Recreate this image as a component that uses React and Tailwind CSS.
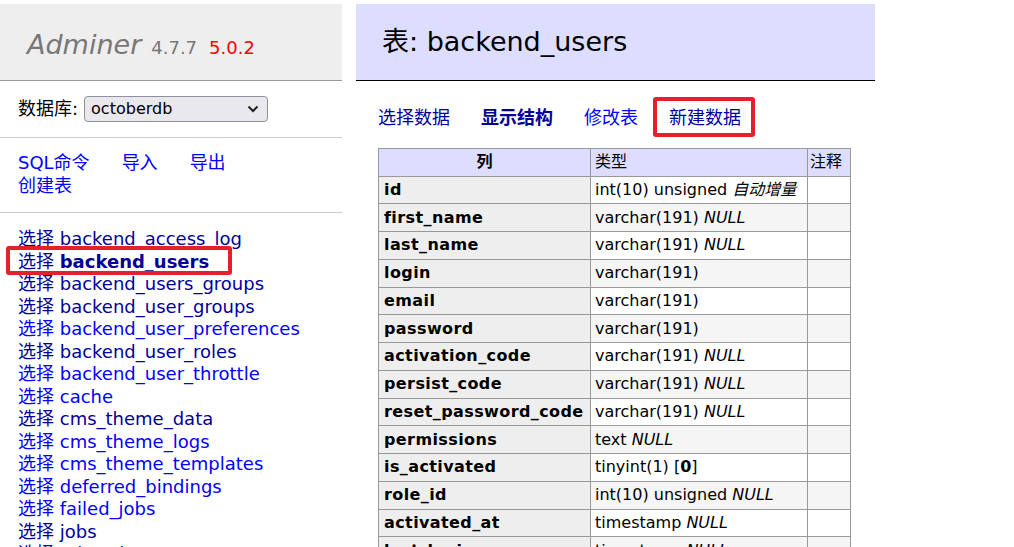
import React from "react";

const tables = [
  ["backend_access_log", true],
  ["backend_users", true, true],
  ["backend_users_groups", true],
  ["backend_user_groups", true],
  ["backend_user_preferences", false],
  ["backend_user_roles", true],
  ["backend_user_throttle", false],
  ["cache", false],
  ["cms_theme_data", true],
  ["cms_theme_logs", false],
  ["cms_theme_templates", false],
  ["deferred_bindings", false],
  ["failed_jobs", false],
  ["jobs", true],
  ["migrations", false],
];

const N = () => <i>NULL</i>;

const rows = [
  ["id", <>int(10) unsigned <i>自动增量</i></>],
  ["first_name", <>varchar(191) <N /></>],
  ["last_name", <>varchar(191) <N /></>],
  ["login", <>varchar(191)</>],
  ["email", <>varchar(191)</>],
  ["password", <>varchar(191)</>],
  ["activation_code", <>varchar(191) <N /></>],
  ["persist_code", <>varchar(191) <N /></>],
  ["reset_password_code", <>varchar(191) <N /></>],
  ["permissions", <>text <N /></>],
  ["is_activated", <>tinyint(1) [<b>0</b>]</>],
  ["role_id", <>int(10) unsigned <N /></>],
  ["activated_at", <>timestamp <N /></>],
  ["last_login", <>timestamp <N /></>],
];

export default function App() {
  return (
    <div
      className="relative w-[1014px] h-[547px] overflow-hidden bg-white flex items-start pt-[4px] text-[18px] leading-[22.5px] text-black"
      style={{ fontFamily: '"DejaVu Sans", Verdana, "Noto Sans CJK SC", sans-serif' }}
    >
      {/* Sidebar */}
      <div className="w-[342px] shrink-0 flex flex-col">
        <div className="shrink-0 h-[77px] bg-[#eee] border-b border-[#999] pl-[27px] flex items-baseline pt-[27px] text-[#777]">
          <span className="italic text-[27px] leading-[27px]">Adminer</span>
          <span className="ml-[10px] text-[18px]">4.7.7</span>
          <span className="ml-[12px] text-[18px] text-[#f00]">5.0.2</span>
        </div>
        <div className="shrink-0 flex items-center pl-[18px] mt-[15px] h-[26px]">
          <span>数据库:</span>
          <div className="ml-[6px] w-[184px] h-[26px] rounded-[4px] border border-[#8f8f9d] bg-[#e9e9ed] flex items-center justify-between pl-[6px] pr-[8px] text-[16px]">
            <span>octoberdb</span>
            <svg width="12" height="8" viewBox="0 0 12 8">
              <path d="M1.5 1.5 L6 6 L10.5 1.5" stroke="#222" strokeWidth="2" fill="none" />
            </svg>
          </div>
        </div>
        <div className="shrink-0 mt-[15px] h-px bg-[#ccc]" />
        <div className="shrink-0 mt-[14px] pl-[18px] text-[#00f]">
          <div className="flex gap-[32px]">
            <span>SQL命令</span>
            <span>导入</span>
            <span>导出</span>
          </div>
          <div>创建表</div>
        </div>
        <div className="shrink-0 mt-[15px] h-px bg-[#ccc]" />
        <div className="shrink-0 mt-[15px] pl-[18px] flex flex-col">
          {tables.map(([name, visited, bold]) => (
            <div key={name} className={"shrink-0 whitespace-nowrap " + (visited ? "text-[#009]" : "text-[#00f]")}>
              选择 <span className={bold ? "font-bold" : ""}>{name}</span>
            </div>
          ))}
        </div>
      </div>

      {/* Main */}
      <div className="ml-[14px] w-[519px] shrink-0 flex flex-col">
        <div className="shrink-0 h-[77px] bg-[#ddf] border-b border-black pl-[26px] flex items-center text-[27px]">
          表: backend_users
        </div>
        <div className="shrink-0 mt-[26px] pl-[22px] flex gap-[31px] h-[22.5px] items-center">
          <span className="text-[#009]">选择数据</span>
          <span className="text-[#009] font-bold">显示结构</span>
          <span className="text-[#00f]">修改表</span>
          <span className="text-[#009]">新建数据</span>
        </div>
        <table className="shrink-0 mt-[18px] ml-[22px] border-collapse w-[472px] table-fixed text-[16px] leading-[20px]">
          <colgroup>
            <col className="w-[212px]" />
            <col className="w-[217px]" />
            <col className="w-[43px]" />
          </colgroup>
          <thead>
            <tr className="h-[28px] bg-[#ddf]">
              <th className="border border-[#999] font-bold text-center p-0">列</th>
              <th className="border border-[#999] font-normal text-left pl-[4px] p-0">类型</th>
              <th className="border border-[#999] font-normal text-left pl-[2px] p-0">注释</th>
            </tr>
          </thead>
          <tbody>
            {rows.map(([name, type], i) => (
              <tr key={name} className={"h-[27.75px] " + (i % 2 ? "bg-[#f5f5f5]" : "bg-white")}>
                <th className="border border-[#999] bg-[#eee] font-bold text-left pl-[5px] p-0 whitespace-nowrap tracking-[0.4px]">{name}</th>
                <td className="border border-[#999] pl-[4px] p-0 whitespace-nowrap">{type}</td>
                <td className="border border-[#999] p-0"></td>
              </tr>
            ))}
          </tbody>
        </table>
      </div>

      {/* annotation boxes */}
      <div className="absolute left-[6px] top-[246px] w-[226px] h-[29px] border-[4px] border-[#e6202a] rounded-[3px]" />
      <div className="absolute left-[653px] top-[97px] w-[102px] h-[40px] border-[4px] border-[#e6202a] rounded-[3px]" />
    </div>
  );
}
